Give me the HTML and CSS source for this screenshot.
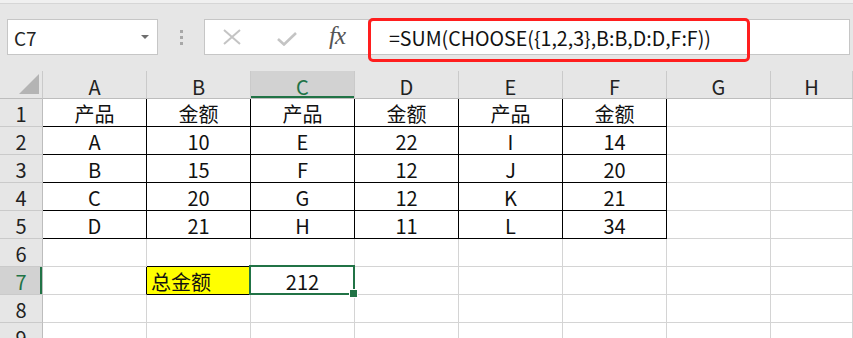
FILE: index.html
```html
<!DOCTYPE html>
<html lang="zh">
<head>
    <meta charset="UTF-8">
    <title>CHOOSE 求和</title>
    <link rel="stylesheet" href="styles.css">
</head>
<body>
    <div class="app">
        <div class="topline"></div>
        <div class="formula-bar">
            <div class="name-box">
                <span>C7</span>
                <span class="arrow"></span>
            </div>
            <div class="grip"><i></i><i></i><i></i></div>
            <div class="fx-box">
                <svg class="ico" width="20" height="16" viewBox="0 0 20 16">
                    <path d="M2 1 L18 15 M18 1 L2 15" stroke="#c4c4c4" stroke-width="2" fill="none"/>
                </svg>
                <svg class="ico" width="20" height="14" viewBox="0 0 20 14">
                    <path d="M1 7 L7 12.5 L19 1" stroke="#c4c4c4" stroke-width="2.6" fill="none"/>
                </svg>
                <span class="fx">fx</span>
            </div>
            <div class="formula">
                <span>=SUM(CHOOSE({1,2,3},B:B,D:D,F:F))</span>
                <div class="mark"></div>
            </div>
        </div>

        <div class="sheet">
            <div class="hd corner"><span class="tri"></span></div>
            <div class="hd">A</div>
            <div class="hd">B</div>
            <div class="hd on">C</div>
            <div class="hd">D</div>
            <div class="hd">E</div>
            <div class="hd">F</div>
            <div class="hd">G</div>
            <div class="hd">H</div>

            <div class="rh">1</div>
            <div class="c t">产品</div><div class="c t">金额</div><div class="c t">产品</div>
            <div class="c t">金额</div><div class="c t">产品</div><div class="c t">金额</div>
            <div class="c"></div><div class="c"></div>

            <div class="rh">2</div>
            <div class="c t">A</div><div class="c t">10</div><div class="c t">E</div>
            <div class="c t">22</div><div class="c t">I</div><div class="c t">14</div>
            <div class="c"></div><div class="c"></div>

            <div class="rh">3</div>
            <div class="c t">B</div><div class="c t">15</div><div class="c t">F</div>
            <div class="c t">12</div><div class="c t">J</div><div class="c t">20</div>
            <div class="c"></div><div class="c"></div>

            <div class="rh">4</div>
            <div class="c t">C</div><div class="c t">20</div><div class="c t">G</div>
            <div class="c t">12</div><div class="c t">K</div><div class="c t">21</div>
            <div class="c"></div><div class="c"></div>

            <div class="rh">5</div>
            <div class="c t">D</div><div class="c t">21</div><div class="c t">H</div>
            <div class="c t">11</div><div class="c t">L</div><div class="c t">34</div>
            <div class="c"></div><div class="c"></div>

            <div class="rh">6</div>
            <div class="c"></div><div class="c bb"></div><div class="c"></div>
            <div class="c"></div><div class="c"></div><div class="c"></div>
            <div class="c"></div><div class="c"></div>

            <div class="rh on">7</div>
            <div class="c br"></div><div class="c t yellow">总金额</div><div class="c sel">212</div>
            <div class="c"></div><div class="c"></div><div class="c"></div>
            <div class="c"></div><div class="c"></div>

            <div class="rh">8</div>
            <div class="c"></div><div class="c"></div><div class="c"></div>
            <div class="c"></div><div class="c"></div><div class="c"></div>
            <div class="c"></div><div class="c"></div>

            <div class="rh">9</div>
            <div class="c"></div><div class="c"></div><div class="c"></div>
            <div class="c"></div><div class="c"></div><div class="c"></div>
            <div class="c"></div><div class="c"></div>
        </div>
    </div>
</body>
</html>
```

FILE: styles.css
```css
* { box-sizing: border-box; }
html, body {
    margin: 0;
    padding: 0;
}
body {
    font-family: "Noto Sans CJK SC", "Noto Sans", sans-serif;
    background: #e6e6e6;
    color: #111;
    width: 853px;
    height: 338px;
    overflow: hidden;
}
.app { width: 853px; height: 338px; overflow: hidden; }

.topline {
    height: 4px;
    background: #f0f0f0;
    border-bottom: 1px solid #d6d6d6;
}

/* formula bar */
.formula-bar {
    height: 67px;
    display: flex;
    align-items: flex-start;
    padding: 15px 3px 0 7px;
}
.name-box {
    width: 151px;
    height: 36px;
    background: #fff;
    border: 1px solid #c6c6c6;
    display: flex;
    align-items: center;
    justify-content: space-between;
    padding: 0 8px 0 6px;
    font-size: 19px;
    color: #222;
}
.arrow {
    width: 0;
    height: 0;
    border-left: 4px solid transparent;
    border-right: 4px solid transparent;
    border-top: 4px solid #6e6e6e;
}
.grip {
    width: 46px;
    height: 36px;
    display: flex;
    flex-direction: column;
    align-items: center;
    justify-content: center;
    gap: 3px;
}
.grip i {
    display: block;
    width: 3px;
    height: 3px;
    background: #a8a8a8;
}
.fx-box {
    width: 164px;
    height: 36px;
    background: #fff;
    border: 1px solid #c6c6c6;
    border-right: none;
    display: flex;
    align-items: center;
    padding-left: 17px;
}
.fx-box .ico { margin-right: 35px; }
.fx-box .ico + .ico { margin-top: 4px; margin-right: 32px; }
.fx {
    font-family: "Liberation Serif", "DejaVu Serif", serif;
    font-style: italic;
    font-size: 25px;
    color: #555;
    letter-spacing: -1px;
    margin-top: -2px;
}
.formula {
    flex: 1;
    height: 36px;
    background: #fff;
    border: 1px solid #c6c6c6;
    position: relative;
    display: flex;
    align-items: center;
    padding-left: 20px;
    font-size: 19.6px;
    color: #111;
}
.mark {
    position: absolute;
    left: -1px;
    top: -2px;
    width: 382px;
    height: 44px;
    border: 3px solid #ff1e1e;
    border-radius: 5px;
}

/* sheet */
.sheet {
    display: grid;
    grid-template-columns: 43px repeat(7, 104px) 1fr;
    grid-auto-rows: 28px;
    background: #fff;
    font-size: 20px;
}
.hd, .rh {
    background: #e6e6e6;
    color: #222;
    display: flex;
    align-items: center;
    justify-content: center;
}
.hd {
    border-right: 1px solid #cacaca;
    border-bottom: 1px solid #bdbdbd;
    padding-top: 4px;
}
.rh {
    border-right: 1px solid #bdbdbd;
    border-bottom: 1px solid #cacaca;
    padding-top: 1px;
}
.hd.on {
    background: #d2d2d2;
    color: #217346;
    box-shadow: inset 0 -2px 0 #217346;
}
.rh.on {
    background: #d2d2d2;
    color: #217346;
    box-shadow: inset -2px 0 0 #217346;
}
.corner {
    position: relative;
}
.tri {
    position: absolute;
    right: 3px;
    bottom: 4px;
    width: 20px;
    height: 20px;
    background: #b4b4b4;
    clip-path: polygon(100% 0, 100% 100%, 0 100%);
}

.c {
    border-right: 1px solid #d4d4d4;
    border-bottom: 1px solid #d4d4d4;
    display: flex;
    align-items: center;
    justify-content: center;
    padding-top: 2px;
    position: relative;
}
.c.t { border-right-color: #000; border-bottom-color: #000; }
.c.bb { border-bottom-color: #000; }
.c.br { border-right-color: #000; }
.c.yellow {
    background: #ffff00;
    justify-content: flex-start;
    padding-left: 4px;
}
.c.sel::after {
    content: "";
    position: absolute;
    left: -2px;
    top: -2px;
    right: -1px;
    bottom: -1px;
    border: 2px solid #217346;
}
.c.sel::before {
    content: "";
    position: absolute;
    right: -4px;
    bottom: -4px;
    width: 7px;
    height: 7px;
    background: #217346;
    border: 1px solid #fff;
    z-index: 1;
}
```
